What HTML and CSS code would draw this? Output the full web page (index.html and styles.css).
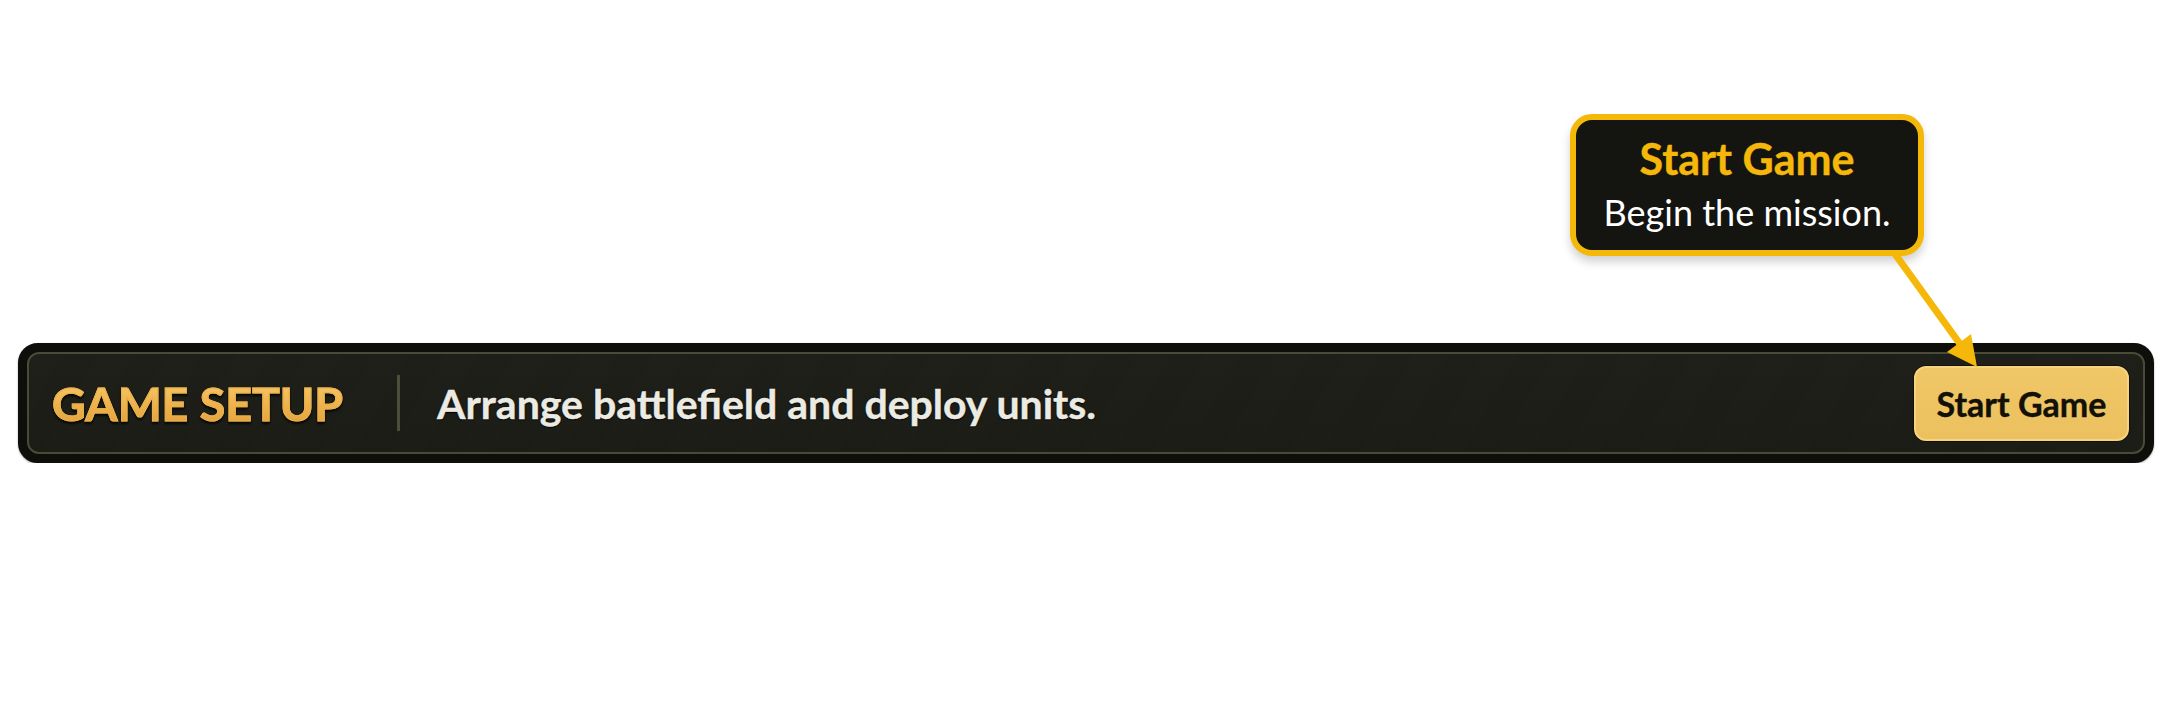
FILE: index.html
```html
<!DOCTYPE html>
<html lang="en">
<head>
<meta charset="utf-8">
<title>Game Setup</title>
<link rel="stylesheet" href="styles.css">
</head>
<body>
  <div class="bar">
    <div class="bar-inner">
      <h1 class="title">GAME SETUP</h1>
      <span class="divider"></span>
      <p class="desc">Arrange battlefield and deploy units.</p>
      <div class="action">
        <div class="tooltip" role="tooltip">
          <div class="tooltip-title">Start Game</div>
          <div class="tooltip-body">Begin the mission.</div>
        </div>
        <svg class="pointer" width="100" height="130" viewBox="0 0 100 130" aria-hidden="true">
          <line x1="11" y1="8" x2="76" y2="98" stroke="#f4b70a" stroke-width="7" stroke-linecap="round"/>
          <polygon points="93,121 87,88 63,106" fill="#f4b70a"/>
        </svg>
        <button class="start-btn" type="button">Start Game</button>
      </div>
    </div>
  </div>
</body>
</html>
```
FILE: styles.css
```css
html, body {
  margin: 0;
  background: #ffffff;
}

body {
  padding: 343px 18px 0;
  font-family: Lato, "Open Sans", "Liberation Sans", sans-serif;
}

/* outer frame of the setup bar */
.bar {
  border: 9px solid #0e0f0b;
  border-radius: 20px;
  background: #0e0f0b;
  box-shadow: 0 1px 2px rgba(0, 0, 0, 0.35);
}

.bar-inner {
  height: 98px;
  display: flex;
  align-items: center;
  padding: 0 14px 0 23px;
  border: 2px solid #4a4b37;
  border-radius: 12px;
  background:
    repeating-linear-gradient(120deg, rgba(255, 255, 255, 0.004) 0 30px, rgba(0, 0, 0, 0.01) 30px 60px),
    linear-gradient(180deg, #1e1f18 0%, #1b1c15 100%);
}

.title {
  margin: 0;
  font-size: 46.5px;
  font-weight: 700;
  line-height: 1;
  color: #f0b955;
  background: linear-gradient(180deg, #f7c96a 0%, #eeb24c 55%, #e2a23e 100%);
  -webkit-background-clip: text;
  background-clip: text;
  -webkit-text-fill-color: transparent;
  -webkit-text-stroke: 1px #eab04a;
  filter: drop-shadow(0 2px 1px rgba(0, 0, 0, 0.8));
}

.divider {
  width: 3px;
  height: 56px;
  margin: 0 37px 0 54px;
  background: #4c4d3b;
}

.desc {
  margin: 0;
  flex: 1;
  font-size: 41px;
  font-weight: 700;
  line-height: 1;
  color: #ecebe3;
  -webkit-text-stroke: 0.4px #ecebe3;
  text-shadow: 0 1px 1px #000, 0 0 2px rgba(0, 0, 0, 0.8);
}

.action {
  position: relative;
}

.start-btn {
  display: block;
  width: 215px;
  height: 75px;
  padding: 0;
  border: 2px solid #f6d47e;
  border-radius: 12px;
  background: linear-gradient(180deg, #f0c767 0%, #ecc05e 100%);
  font-family: Lato, "Open Sans", "Liberation Sans", sans-serif;
  font-size: 34px;
  font-weight: 700;
  color: #111109;
  -webkit-text-stroke: 0.4px #111109;
  box-shadow: 0 0 0 1px rgba(0, 0, 0, 0.4);
}

/* callout floating above the button */
.tooltip {
  position: absolute;
  right: 205px;
  bottom: calc(100% + 110px);
  width: 354px;
  height: 142px;
  box-sizing: border-box;
  display: flex;
  flex-direction: column;
  align-items: center;
  padding-top: 14px;
  border: 6px solid #f3b808;
  border-radius: 22px;
  background: #141410;
  box-shadow: 0 6px 10px rgba(0, 0, 0, 0.18);
  z-index: 2;
}

.tooltip-title {
  font-size: 43px;
  font-weight: 700;
  line-height: 50px;
  color: #f5b80a;
  -webkit-text-stroke: 0.4px #f5b80a;
}

.tooltip-body {
  margin-top: 6px;
  font-size: 36px;
  font-weight: 400;
  line-height: 44px;
  color: #ffffff;
}

.pointer {
  position: absolute;
  left: -30px;
  top: -120px;
  z-index: 3;
  overflow: visible;
}
```
